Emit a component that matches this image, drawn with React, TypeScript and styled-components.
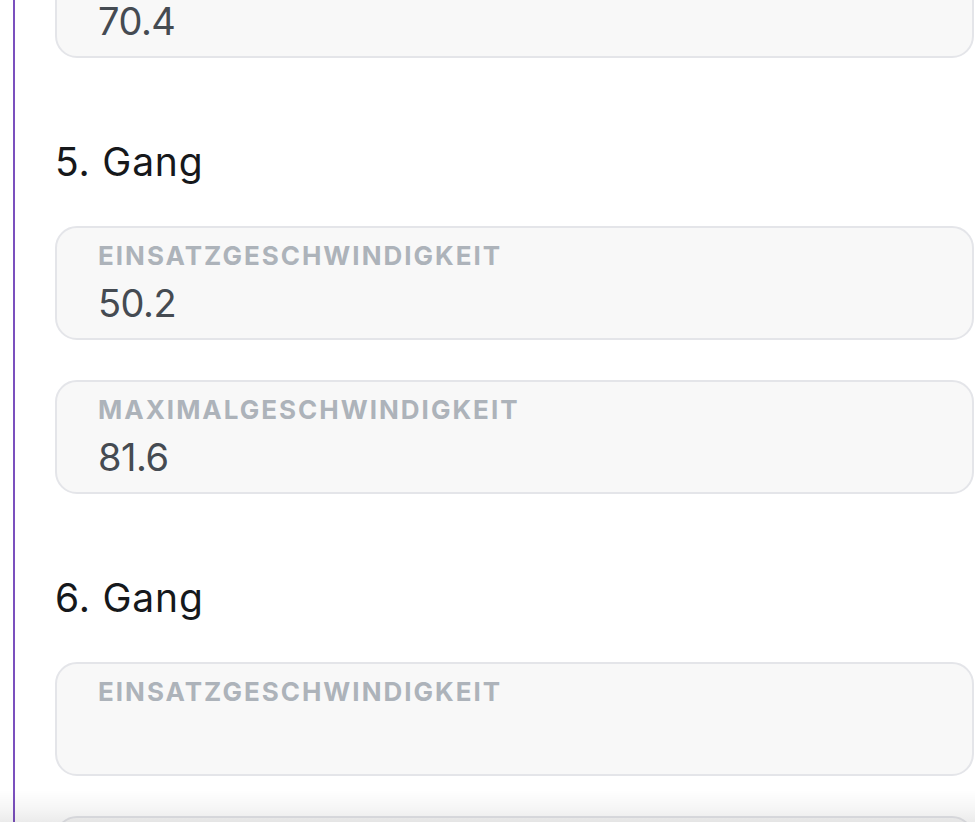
import React from "react";
import styled, { createGlobalStyle } from "styled-components";

const GlobalStyle = createGlobalStyle`
  html, body {
    margin: 0;
    padding: 0;
    background: #ffffff;
  }
  body {
    font-family: Inter, "Noto Sans", "Liberation Sans", sans-serif;
  }
`;

const Frame = styled.div`
  position: relative;
  height: 822px;
  overflow: hidden;
  display: flex;
  padding-left: 13px;
  box-sizing: border-box;
`;

const Rail = styled.div`
  flex: 1;
  border-left: 2px solid #7b50be;
  padding-left: 40px;
  min-width: 0;
`;

const List = styled.div`
  margin-top: -56px;
  margin-right: 1px;
  display: flex;
  flex-direction: column;
`;

const Section = styled.section`
  display: flex;
  flex-direction: column;
  gap: 40px;
`;

const Heading = styled.h2`
  margin: 80px 0 40px 0;
  font-size: 39px;
  line-height: 48px;
  font-weight: 400;
  color: #16181b;
  letter-spacing: 0.8px;
`;

const Field = styled.div`
  box-sizing: border-box;
  height: 114px;
  border: 2px solid #e4e5e9;
  border-radius: 22px;
  background: #f8f8f8;
  padding: 14px 20px 13px 41px;
  display: flex;
  flex-direction: column;
  gap: 11px;
`;

const Label = styled.div`
  font-size: 26px;
  line-height: 28px;
  font-weight: 700;
  color: #adb3ba;
  letter-spacing: 2px;
  text-transform: uppercase;
  white-space: nowrap;
`;

const Value = styled.div`
  font-size: 38px;
  line-height: 44px;
  min-height: 44px;
  font-weight: 400;
  color: #454b52;
  letter-spacing: -0.5px;
`;

const BottomShade = styled.div`
  position: absolute;
  left: 0;
  right: 0;
  bottom: 0;
  height: 32px;
  pointer-events: none;
  background: linear-gradient(
    to bottom,
    rgba(0, 0, 0, 0) 0%,
    rgba(0, 0, 0, 0.035) 55%,
    rgba(0, 0, 0, 0.08) 100%
  );
`;

type Gear = {
  title?: string;
  fields: { label: string; value: string }[];
};

const gears: Gear[] = [
  {
    fields: [{ label: "Maximalgeschwindigkeit", value: "70.4" }],
  },
  {
    title: "5. Gang",
    fields: [
      { label: "Einsatzgeschwindigkeit", value: "50.2" },
      { label: "Maximalgeschwindigkeit", value: "81.6" },
    ],
  },
  {
    title: "6. Gang",
    fields: [
      { label: "Einsatzgeschwindigkeit", value: "" },
      { label: "Maximalgeschwindigkeit", value: "" },
    ],
  },
];

export default function App() {
  return (
    <>
      <GlobalStyle />
      <Frame>
        <Rail>
          <List>
            {gears.map((g, i) => (
              <React.Fragment key={i}>
                {g.title && <Heading>{g.title}</Heading>}
                <Section>
                  {g.fields.map((f) => (
                    <Field key={f.label}>
                      <Label>{f.label}</Label>
                      <Value>{f.value}</Value>
                    </Field>
                  ))}
                </Section>
              </React.Fragment>
            ))}
          </List>
        </Rail>
        <BottomShade />
      </Frame>
    </>
  );
}
